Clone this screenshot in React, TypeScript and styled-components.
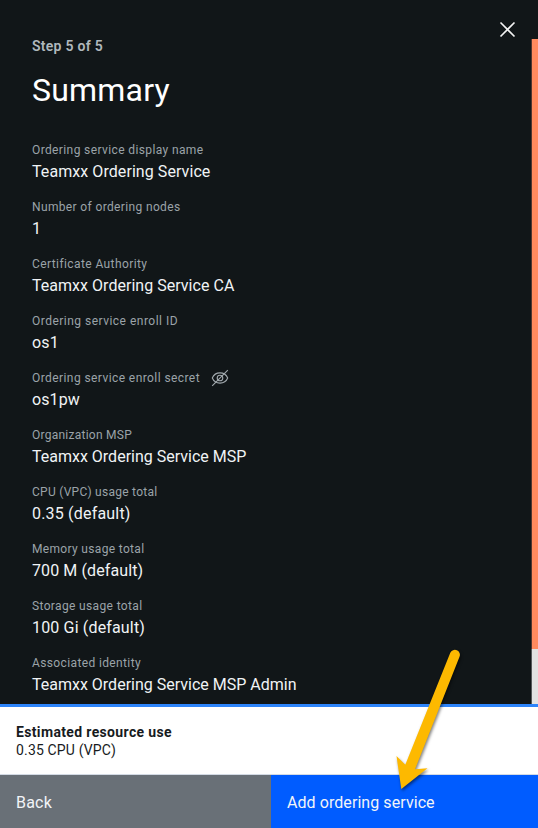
import React from 'react';
import styled, { createGlobalStyle } from 'styled-components';

const GlobalStyle = createGlobalStyle`
  *, *::before, *::after { box-sizing: border-box; }
  body { margin: 0; background: #111618; overflow: hidden; }
`;

const Page = styled.div`
  position: relative;
  display: flex;
  flex-direction: column;
  width: 538px;
  height: 828px;
  background: #111618;
  font-family: Roboto, 'Open Sans', sans-serif;
`;

const Main = styled.div`
  display: flex;
  height: 704px;
`;

const Panel = styled.section`
  display: flex;
  flex-direction: column;
  flex: 1;
  padding: 37px 0 0 32px;
  overflow: hidden;
`;

const Backdrop = styled.aside`
  display: flex;
  flex-direction: column;
  width: 7px;
  padding-top: 39px;
`;

const BackdropTile = styled.div`
  height: 610px;
  border-left: 1px solid #50372f;
  background: #ff8a5f;
`;

const BackdropBase = styled.div`
  flex: 1;
  border-left: 1px solid #55595a;
  background: #e2e2e2;
`;

const Header = styled.header`
  display: flex;
  flex: 0 0 105px;
  justify-content: space-between;
`;

const Step = styled.p`
  margin: 0;
  color: #b0b8bd;
  font-size: 14px;
  font-weight: 600;
  line-height: 18px;
  letter-spacing: 0.27px;
`;

const Title = styled.h1`
  margin: 15px 0 0;
  color: #fff;
  font-size: 32px;
  font-weight: 400;
  line-height: 40px;
  letter-spacing: 0.2px;
`;

const CloseButton = styled.button`
  display: flex;
  align-self: flex-start;
  margin: -16px 15px 0 0;
  padding: 0;
  border: 0;
  background: none;
  color: #f3f3f3;
`;

const Fields = styled.dl`
  display: flex;
  flex-direction: column;
  flex-shrink: 0;
  margin: 0;
`;

const Field = styled.div`
  height: 57px;
`;

const Label = styled.dt<{ $tracking: number }>`
  display: flex;
  align-items: center;
  gap: 11px;
  height: 17px;
  color: #9ba3a8;
  font-size: 12px;
  line-height: 17px;
  letter-spacing: ${(p) => p.$tracking}px;
  white-space: nowrap;
`;

const Value = styled.dd<{ $tracking: number }>`
  margin: 0;
  color: #f0f3f5;
  font-size: 16px;
  line-height: 25px;
  letter-spacing: ${(p) => p.$tracking}px;
  white-space: nowrap;
`;

const Eye = styled.svg`
  flex-shrink: 0;
  margin-bottom: 2px;
`;

const Estimate = styled.section`
  height: 71px;
  padding: 16px 16px 0;
  border-top: 3px solid #2d84fa;
  border-bottom: 1px solid #d3dae4;
  background: #fff;
  color: #171b1e;
  font-size: 14px;
  line-height: 18px;
`;

const EstimateTitle = styled.div`
  font-weight: 700;
  letter-spacing: 0.35px;
`;

const EstimateValue = styled.div`
  letter-spacing: 0.16px;
`;

const Actions = styled.footer`
  display: flex;
  height: 53px;
`;

const ActionButton = styled.button<{ $primary?: boolean }>`
  flex: ${(p) => (p.$primary ? '1' : '0 0 271px')};
  padding: 2px 16px 0;
  border: 0;
  background: ${(p) => (p.$primary ? '#005cff' : '#697077')};
  color: #f2f4f8;
  font-family: inherit;
  font-size: 16px;
  line-height: 20px;
  letter-spacing: ${(p) => (p.$primary ? 0.07 : 0.2)}px;
  text-align: left;
`;

const Pointer = styled.svg`
  position: absolute;
  left: 380px;
  top: 640px;
  pointer-events: none;
  filter: drop-shadow(1px 2px 1.5px rgba(0, 0, 0, 0.5));
`;

type Entry = { label: string; labelTracking: number; value: string; valueTracking: number; secret?: boolean };

const entries: Entry[] = [
  { label: 'Ordering service display name', labelTracking: 0.382, value: 'Teamxx Ordering Service', valueTracking: 0.07 },
  { label: 'Number of ordering nodes', labelTracking: 0.359, value: '1', valueTracking: 0 },
  { label: 'Certificate Authority', labelTracking: 0.407, value: 'Teamxx Ordering Service CA', valueTracking: 0.03 },
  { label: 'Ordering service enroll ID', labelTracking: 0.481, value: 'os1', valueTracking: 0.2 },
  { label: 'Ordering service enroll secret', labelTracking: 0.419, value: 'os1pw', valueTracking: 0.12, secret: true },
  { label: 'Organization MSP', labelTracking: 0.252, value: 'Teamxx Ordering Service MSP', valueTracking: 0 },
  { label: 'CPU (VPC) usage total', labelTracking: 0.27, value: '0.35 (default)', valueTracking: 0.19 },
  { label: 'Memory usage total', labelTracking: 0.334, value: '700 M (default)', valueTracking: 0.1 },
  { label: 'Storage usage total', labelTracking: 0.36, value: '100 Gi (default)', valueTracking: 0.16 },
  { label: 'Associated identity', labelTracking: 0.371, value: 'Teamxx Ordering Service MSP Admin', valueTracking: 0 },
];

const HiddenIcon = () => (
  <Eye width="18" height="18" viewBox="0 0 18 18" fill="none" stroke="#a2a9ae" strokeWidth="1.1">
    <path d="M1.3 9C2.7 5.7 5.6 3.9 9 3.9S15.3 5.7 16.7 9C15.3 12.3 12.4 14.1 9 14.1S2.7 12.3 1.3 9Z" />
    <circle cx="9" cy="9" r="2.8" />
    <path d="M1.2 16.8 16.8 1.2" />
  </Eye>
);

export default function App() {
  return (
    <Page>
      <GlobalStyle />
      <Main>
        <Panel>
          <Header>
            <div>
              <Step>Step 5 of 5</Step>
              <Title>Summary</Title>
            </div>
            <CloseButton aria-label="Close">
              <svg width="17" height="17" viewBox="0 0 17 17" fill="none" stroke="currentColor" strokeWidth="1.6">
                <path d="M1.5 1.5 15.5 15.5M15.5 1.5 1.5 15.5" />
              </svg>
            </CloseButton>
          </Header>
          <Fields>
            {entries.map((e) => (
              <Field key={e.label}>
                <Label $tracking={e.labelTracking}>
                  {e.label}
                  {e.secret && <HiddenIcon />}
                </Label>
                <Value $tracking={e.valueTracking}>{e.value}</Value>
              </Field>
            ))}
          </Fields>
        </Panel>
        <Backdrop>
          <BackdropTile />
          <BackdropBase />
        </Backdrop>
      </Main>
      <Estimate>
        <EstimateTitle>Estimated resource use</EstimateTitle>
        <EstimateValue>0.35 CPU (VPC)</EstimateValue>
      </Estimate>
      <Actions>
        <ActionButton>Back</ActionButton>
        <ActionButton $primary>Add ordering service</ActionButton>
      </Actions>
      <Pointer width="90" height="160" viewBox="0 0 90 160">
        <path
          fill="#fdb900"
          d="M70.3 12.8A5 5 0 0 1 79.5 16.8L35 129.3 47.5 128.3 21.3 149 16.5 116 25.3 124.8Z"
        />
      </Pointer>
    </Page>
  );
}
